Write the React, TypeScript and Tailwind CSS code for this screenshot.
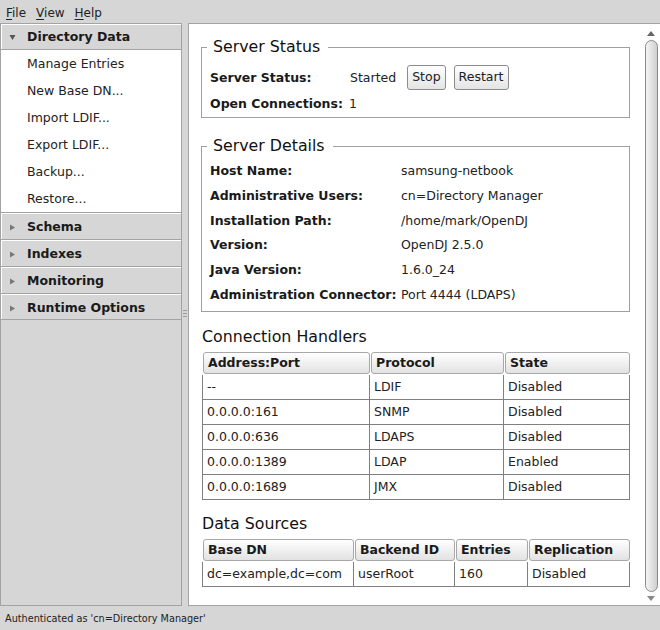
import React from 'react';

const navItems = ['Manage Entries', 'New Base DN...', 'Import LDIF...', 'Export LDIF...', 'Backup...', 'Restore...'];
const otherSections = ['Schema', 'Indexes', 'Monitoring', 'Runtime Options'];

const details = [
  ['Host Name:', 'samsung-netbook'],
  ['Administrative Users:', 'cn=Directory Manager'],
  ['Installation Path:', '/home/mark/OpenDJ'],
  ['Version:', 'OpenDJ 2.5.0'],
  ['Java Version:', '1.6.0_24'],
  ['Administration Connector:', 'Port 4444 (LDAPS)'],
];

const handlers = [
  ['--', 'LDIF', 'Disabled'],
  ['0.0.0.0:161', 'SNMP', 'Disabled'],
  ['0.0.0.0:636', 'LDAPS', 'Disabled'],
  ['0.0.0.0:1389', 'LDAP', 'Enabled'],
  ['0.0.0.0:1689', 'JMX', 'Disabled'],
];

const sources = [['dc=example,dc=com', 'userRoot', '160', 'Disabled']];

// Menu bar with mnemonic underlines
function MenuBar() {
  const menus = ['File', 'View', 'Help'];
  return (
    <div className="h-[23px] flex items-center pt-[2px] pl-[6px] gap-[10px] text-[12px] text-[#222]">
      {menus.map((m) => (
        <span key={m}>
          <span className="underline underline-offset-2">{m[0]}</span>
          {m.slice(1)}
        </span>
      ))}
    </div>
  );
}

function DownTriangle() {
  return (
    <svg width="7" height="6" viewBox="0 0 7 6" className="shrink-0">
      <polygon points="0.5,0 6.5,0 3.5,5" fill="#555" />
    </svg>
  );
}

function RightTriangle() {
  return (
    <svg width="7" height="7" viewBox="0 0 7 7" className="shrink-0">
      <polygon points="1,0.5 6,3.5 1,6.5" fill="#777" />
    </svg>
  );
}

// Sidebar with collapsible sections
function Sidebar() {
  return (
    <div className="w-[182px] shrink-0 border border-[#a3a3a3] flex flex-col">
      <div className="h-[26px] flex items-center pt-[2px] pl-[8px] gap-[11px] shadow-[inset_1px_1px_0_#fff] border-b border-[#a3a3a3]">
        <DownTriangle />
        <span className="font-bold text-[12.5px] text-[#1a1a1a]">Directory Data</span>
      </div>
      <div className="bg-white">
        {navItems.map((item) => (
          <div key={item} className="h-[27px] flex items-center pt-[2px] pl-[26px] text-[12.5px] text-[#222]">
            {item}
          </div>
        ))}
      </div>
      {otherSections.map((s, i) => (
        <div
          key={s}
          className={`h-[27px] flex items-center pt-[3px] pl-[8px] gap-[11px] border-t border-[#a3a3a3] shadow-[inset_1px_1px_0_#fff] ${i === otherSections.length - 1 ? 'border-b' : ''}`}
        >
          <RightTriangle />
          <span className="font-bold text-[12.5px] text-[#1a1a1a]">{s}</span>
        </div>
      ))}
    </div>
  );
}

function Splitter() {
  return (
    <div className="w-[6px] shrink-0 flex flex-col items-center pt-[287px]">
      <div className="w-[4px] flex flex-col gap-[2px]">
        <div className="h-px bg-[#9a9a9a]" />
        <div className="h-px bg-[#9a9a9a]" />
        <div className="h-px bg-[#9a9a9a]" />
      </div>
    </div>
  );
}

function Button({ children }: { children: React.ReactNode }) {
  return (
    <div className="h-[25px] px-[4px] flex items-center rounded-[3px] border border-[#8c8c8c] bg-gradient-to-b from-white to-[#e4e4e4] text-[12.5px] text-[#222]">
      {children}
    </div>
  );
}

function Group({ title, children, className }: { title: string; children: React.ReactNode; className?: string }) {
  return (
    <fieldset className={`border border-[#a0a0a0] px-[8px] ${className ?? ''}`}>
      <legend className="-ml-[3px] pl-[6px] pr-[8px] text-[15.8px] leading-[18px] text-[#111]">{title}</legend>
      {children}
    </fieldset>
  );
}

function DataTable({ cols, widths, rows }: { cols: string[]; widths: number[]; rows: string[][] }) {
  return (
    <div className="ml-[1px] w-[428px]">
      <div className="flex h-[24px]">
        {cols.map((c, i) => (
          <div key={c} className="h-full py-px pl-px" style={{ width: widths[i] + (i === 0 ? 1 : 0) }}>
            <div className="h-full flex items-center pt-px pl-[4px] rounded-[3px] border border-[#a8a8a8] bg-gradient-to-b from-white to-[#e2e2e2] font-bold text-[12.5px] text-[#1a1a1a]">
              {c}
            </div>
          </div>
        ))}
      </div>
      {rows.map((r, ri) => (
        <div key={ri} className="flex h-[25px] border-l border-b border-[#808080]">
          {r.map((cell, ci) => (
            <div
              key={ci}
              className="h-full flex items-center pt-px pl-[4px] border-r border-[#808080] text-[12.5px] text-[#222]"
              style={{ width: widths[ci] }}
            >
              {cell}
            </div>
          ))}
        </div>
      ))}
    </div>
  );
}

function ScrollBar() {
  return (
    <div className="w-[18px] shrink-0 flex flex-col items-center">
      <div className="h-[16px] flex items-center justify-center pt-[2px]">
        <svg width="8" height="5" viewBox="0 0 8 5">
          <polygon points="4,0 8,5 0,5" fill="#666" />
        </svg>
      </div>
      <div className="flex-1 w-[13px] rounded-full border border-[#8a8a8a] bg-gradient-to-r from-[#f5f5f5] to-[#cfcfcf]" />
      <div className="h-[13px] flex items-center justify-center">
        <svg width="8" height="5" viewBox="0 0 8 5">
          <polygon points="0,0 8,0 4,5" fill="#888" />
        </svg>
      </div>
    </div>
  );
}

function MainPanel() {
  return (
    <div className="flex-1 border border-[#a3a3a3] bg-white flex">
      <div className="flex-1 px-[12px] pt-[14px]">
        <Group title="Server Status">
          <div className="mt-[9px] h-[25px] flex items-center text-[12.5px] text-[#222]">
            <span className="w-[140px] pt-px font-bold text-[12.5px] text-[#1a1a1a]">Server Status:</span>
            <span className="pt-px">Started</span>
            <div className="ml-[11px] flex gap-[8px]">
              <Button>Stop</Button>
              <Button>Restart</Button>
            </div>
          </div>
          <div className="mt-[3px] h-[24px] pb-[2px] flex items-center text-[12.5px] text-[#222]">
            <span className="font-bold text-[12.5px] text-[#1a1a1a]">Open Connections:</span>
            <span className="ml-[6px]">1</span>
          </div>
        </Group>

        <Group title="Server Details" className="mt-[19px] pb-[3px]">
          <div className="pt-[4px]">
            {details.map(([k, v]) => (
              <div key={k} className="h-[24.8px] flex items-center">
                <span className="w-[191px] shrink-0 font-bold text-[12.5px] text-[#1a1a1a]">{k}</span>
                <span className="text-[12.5px] text-[#222]">{v}</span>
              </div>
            ))}
          </div>
        </Group>

        <div className="mt-[16px] ml-[1px] text-[15.8px] leading-[18px] text-[#111]">Connection Handlers</div>
        <div className="mt-[5px]">
          <DataTable cols={['Address:Port', 'Protocol', 'State']} widths={[167, 134, 126]} rows={handlers} />
        </div>

        <div className="mt-[15px] ml-[1px] text-[15.8px] leading-[18px] text-[#111]">Data Sources</div>
        <div className="mt-[5px]">
          <DataTable cols={['Base DN', 'Backend ID', 'Entries', 'Replication']} widths={[151, 101, 73, 102]} rows={sources} />
        </div>
      </div>
      <ScrollBar />
    </div>
  );
}

export default function App() {
  return (
    <div className="w-[660px] h-[630px] bg-[#d6d6d6] flex flex-col font-['DejaVu_Sans',sans-serif] overflow-hidden">
      <MenuBar />
      <div className="h-[583px] flex">
        <Sidebar />
        <Splitter />
        <MainPanel />
      </div>
      <div className="flex-1 flex items-center pt-[2px] pl-[5px] text-[9.7px] text-[#222]">
        Authenticated as 'cn=Directory Manager'
      </div>
    </div>
  );
}
